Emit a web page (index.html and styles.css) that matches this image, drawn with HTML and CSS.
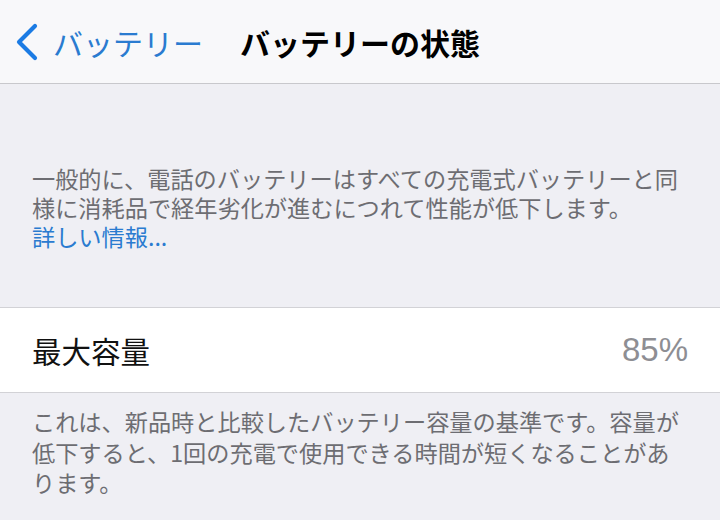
FILE: index.html
```html
<!DOCTYPE html>
<html>
    <head>
        <meta charset="utf-8">
        <link rel="stylesheet" href="styles.css">
    </head>
    <body>
        <div class="navbar">
            <a class="back" href="#">
                <svg class="chevron" width="24" height="38" viewBox="0 0 24 38">
                    <polyline points="20,3 4,19 20,35" fill="none" stroke="#1b7be4" stroke-width="4.2" stroke-linecap="round" stroke-linejoin="round"/>
                </svg>
                <span>バッテリー</span>
            </a>
            <h1 class="title">バッテリーの状態</h1>
            <div></div>
        </div>

        <div class="intro">
            <p class="note">一般的に、電話のバッテリーはすべての充電式バッテリーと同<br>様に消耗品で経年劣化が進むにつれて性能が低下します。</p>
            <a class="more" href="#">詳しい情報...</a>
        </div>

        <div class="row">
            <span class="label">最大容量</span>
            <span class="value">85%</span>
        </div>

        <div class="footer">
            <p class="note">これは、新品時と比較したバッテリー容量の基準です。容量が<br>低下すると、1回の充電で使用できる時間が短くなることがあ<br>ります。</p>
        </div>
    </body>
</html>
```

FILE: styles.css
```css
body{
    margin:0;
    background-color:#efeff4;
    font-family:"Noto Sans CJK JP","Noto Sans",sans-serif;
    width:720px;
    height:520px;
    overflow:hidden;
}

.navbar{
    height:83px;
    background-color:#f8f8fa;
    border-bottom:1px solid #c8c8cc;
    display:grid;
    grid-template-columns:1fr auto 1fr;
    align-items:center;
}

.back{
    display:flex;
    align-items:center;
    gap:14px;
    padding-left:15px;
    color:#2a7bd0;
    font-size:30px;
    text-decoration:none;
}

.chevron{
    display:block;
}

.title{
    margin:0;
    font-size:30px;
    font-weight:700;
    color:#000;
}

.intro{
    padding:80px 12px 56px 32px;
    border-bottom:1px solid #d2d2d6;
}

.note{
    margin:0;
    font-size:23.2px;
    line-height:29px;
    color:#6d6d72;
    white-space:nowrap;
}

.more{
    display:block;
    font-size:23.2px;
    line-height:29px;
    color:#2a7bd0;
    text-decoration:none;
}

.row{
    height:84px;
    background-color:#fff;
    border-bottom:1px solid #d2d2d6;
    display:flex;
    align-items:center;
    justify-content:space-between;
    padding:0 32px;
}

.label{
    font-size:29.5px;
    color:#111;
}

.value{
    font-family:"Liberation Sans",sans-serif;
    font-size:33px;
    color:#8e8e93;
}

.footer{
    padding:13px 12px 13px 32px;
}

.footer .note{
    line-height:30.5px;
}
```
